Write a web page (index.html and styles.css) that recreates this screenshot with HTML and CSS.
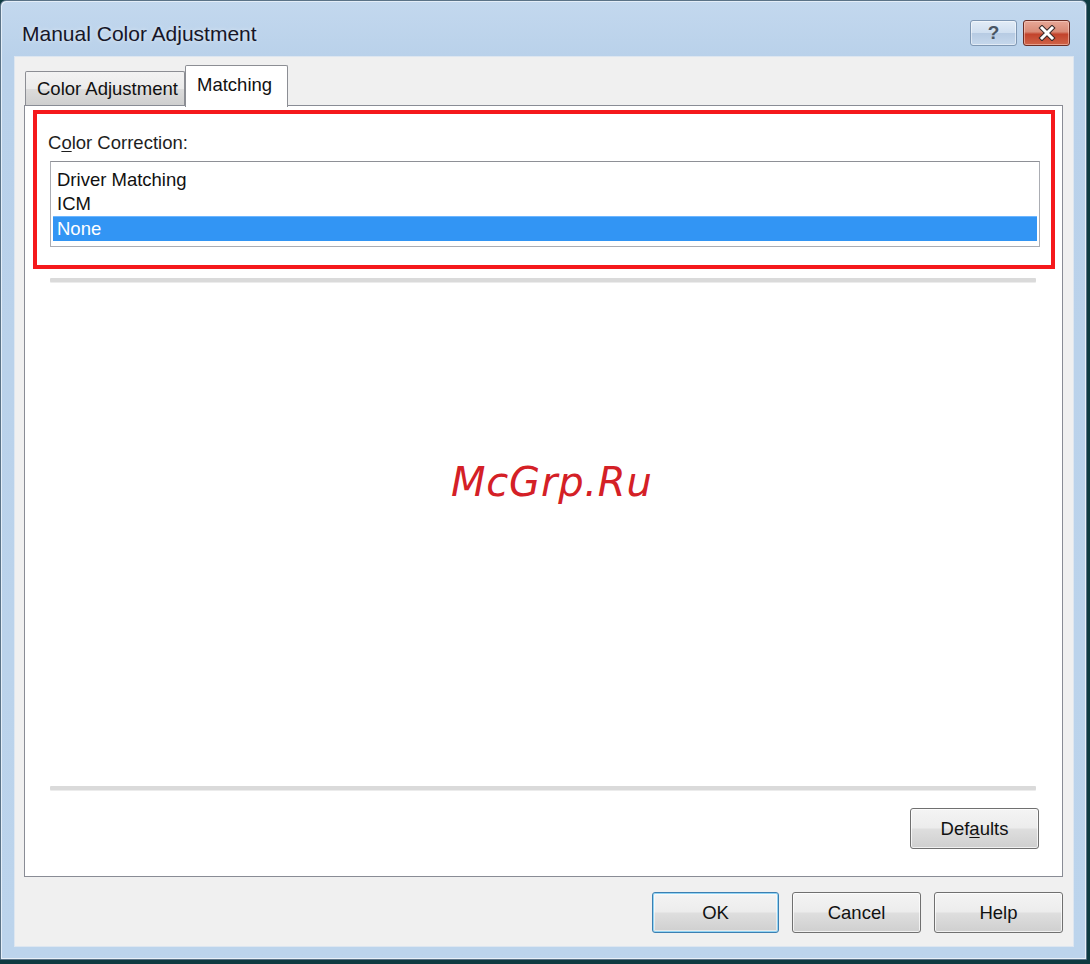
FILE: index.html
```html
<!DOCTYPE html>
<html>
<head>
<meta charset="utf-8">
<title>Manual Color Adjustment</title>
<link rel="stylesheet" href="styles.css">
</head>
<body>
<div class="window">
  <div class="titlebar">
    <div class="title">Manual Color Adjustment</div>
    <div class="caption-buttons">
      <div class="cap-btn cap-help"><span>?</span></div>
      <div class="cap-btn cap-close">
        <svg width="20" height="16" viewBox="0 0 20 16">
          <path d="M5 3 L15 13 M15 3 L5 13" stroke="#3a2a2a" stroke-width="5" stroke-linecap="square"/>
          <path d="M5 3 L15 13 M15 3 L5 13" stroke="#ffffff" stroke-width="3" stroke-linecap="square"/>
        </svg>
      </div>
    </div>
  </div>
  <div class="client">
    <div class="tabstrip">
      <div class="tab">Color Adjustment</div>
      <div class="tab tab-active">Matching</div>
    </div>
    <div class="panel">
      <div class="highlight-box">
        <div class="label">C<u>o</u>lor Correction:</div>
        <div class="listbox">
          <div class="item">Driver Matching</div>
          <div class="item">ICM</div>
          <div class="item item-selected">None</div>
        </div>
      </div>
      <div class="separator sep-top"></div>
      <div class="spacer"></div>
      <div class="separator"></div>
      <div class="panel-buttons">
        <div class="btn">Def<u>a</u>ults</div>
      </div>
      <div class="watermark">McGrp.Ru</div>
    </div>
    <div class="dialog-buttons">
      <div class="btn btn-default">OK</div>
      <div class="btn">Cancel</div>
      <div class="btn">Help</div>
    </div>
  </div>
</div>
</body>
</html>
```
FILE: styles.css
```css
html, body {
  margin: 0;
  padding: 0;
}
body {
  width: 1090px;
  height: 964px;
  background: #0e3b41;
  font-family: "Liberation Sans", Arial, sans-serif;
  overflow: hidden;
}
.window {
  box-sizing: border-box;
  width: 1087px;
  height: 960px;
  border: 1px solid #5b7387;
  border-radius: 6px 6px 0 0;
  background: linear-gradient(to bottom, #c3d8ee 0%, #b9d1ea 6%, #bcd4ec 100%);
  padding: 0 12px 12px 13px;
  display: flex;
  flex-direction: column;
  box-shadow: inset 1px 1px 0 #e4eef8, inset -1px -1px 0 #e8f0f8;
}
.titlebar {
  height: 55px;
  display: flex;
  align-items: flex-start;
  justify-content: space-between;
}
.title {
  margin-top: 21px;
  margin-left: 8px;
  font-size: 21px;
  line-height: 24px;
  color: #161628;
  text-shadow: 0 0 4px rgba(255,255,255,0.6);
}
.caption-buttons {
  display: flex;
  gap: 6px;
  margin-top: 19px;
  margin-right: 4px;
}
.cap-btn {
  box-sizing: border-box;
  width: 47px;
  height: 26px;
  border-radius: 3px;
  display: flex;
  align-items: center;
  justify-content: center;
}
.cap-help {
  border: 1px solid #7f97b3;
  background: linear-gradient(to bottom, #e2ecf7 0%, #d0dff0 48%, #b7cbe3 52%, #c6d8ec 100%);
  box-shadow: inset 0 0 0 1px rgba(255,255,255,0.5);
}
.cap-help span {
  font-size: 19px;
  font-weight: bold;
  color: #4a5664;
  line-height: 20px;
}
.cap-close {
  border: 1px solid #6a2d24;
  background: linear-gradient(to bottom, #e7a898 0%, #d98a76 45%, #c2432c 55%, #d06448 100%);
  box-shadow: inset 0 0 0 1px rgba(255,220,210,0.5);
}
.client {
  flex: 1;
  background: #f0f0f0;
  box-sizing: border-box;
  border: 1px solid #dde6f0;
  padding: 8px 10px 11px 9px;
  display: flex;
  flex-direction: column;
}
.tabstrip {
  height: 42px;
  display: flex;
  align-items: flex-end;
  padding-left: 1px;
  position: relative;
  z-index: 1;
  margin-bottom: -2px;
}
.tab {
  box-sizing: border-box;
  height: 34px;
  width: 160px;
  margin-bottom: 2px;
  border: 1px solid #8c8e94;
  border-bottom: none;
  border-radius: 2px 2px 0 0;
  background: linear-gradient(to bottom, #f3f3f3 0%, #ebebeb 50%, #dcdcdc 52%, #cfcfcf 100%);
  font-size: 18.5px;
  line-height: 34px;
  padding-left: 11px;
  color: #111;
  white-space: nowrap;
}
.tab-active {
  height: 42px;
  width: 103px;
  margin-bottom: 0;
  background: #ffffff;
  padding-left: 11px;
  line-height: 38px;
}
.panel {
  position: relative;
  box-sizing: border-box;
  height: 772px;
  border: 1px solid #898c95;
  background: #ffffff;
  display: flex;
  flex-direction: column;
  padding: 4px 7px 27px 8px;
}
.highlight-box {
  border: 4px solid #f5191c;
  padding: 19px 10px 18px 13px;
}
.label {
  font-size: 18.5px;
  line-height: 20px;
  color: #1e1e1e;
  margin-left: -2px;
}
.label u, .btn u {
  text-decoration-thickness: 1px;
  text-underline-offset: 2px;
}
.listbox {
  margin-top: 8px;
  margin-right: 1px;
  border: 1px solid #abadb3;
  border-top-color: #8e9096;
  padding: 6px 2px 5px 2px;
  background: #ffffff;
}
.item {
  font-size: 18.5px;
  line-height: 24px;
  height: 24px;
  padding-left: 4px;
  color: #111;
}
.item-selected {
  background: #3295f4;
  color: #ffffff;
  height: 25px;
  line-height: 26px;
  box-shadow: inset 0 1px 0 #6db6ff;
}
.separator {
  height: 4px;
  margin: 0 19px 0 17px;
  background: #dadada;
  border-radius: 1px;
  box-shadow: 0 1px 0 #ececec;
}
.sep-top {
  margin-top: 9px;
}
.spacer {
  flex: 1;
}
.panel-buttons {
  display: flex;
  justify-content: flex-end;
  margin-top: 18px;
  padding-right: 16px;
}
.btn {
  box-sizing: border-box;
  width: 129px;
  height: 41px;
  border: 1px solid #707070;
  border-radius: 3px;
  background: linear-gradient(to bottom, #f4f4f4 0%, #ececec 48%, #dedede 52%, #cfcfcf 100%);
  box-shadow: inset 0 0 0 1px rgba(255,255,255,0.7);
  font-size: 18.5px;
  line-height: 39px;
  text-align: center;
  color: #111;
}
.dialog-buttons {
  display: flex;
  justify-content: flex-end;
  gap: 13px;
  margin-top: 15px;
}
.btn-default {
  width: 127px;
  border-color: #3c7fb1;
  box-shadow: inset 0 0 0 1px #92d4f4, inset 0 0 0 2px rgba(255,255,255,0.5);
}
.watermark {
  position: absolute;
  left: 426px;
  top: 353px;
  font-family: "DejaVu Sans", sans-serif;
  font-style: italic;
  font-size: 40px;
  color: #d42026;
  letter-spacing: 0.8px;
}
```
